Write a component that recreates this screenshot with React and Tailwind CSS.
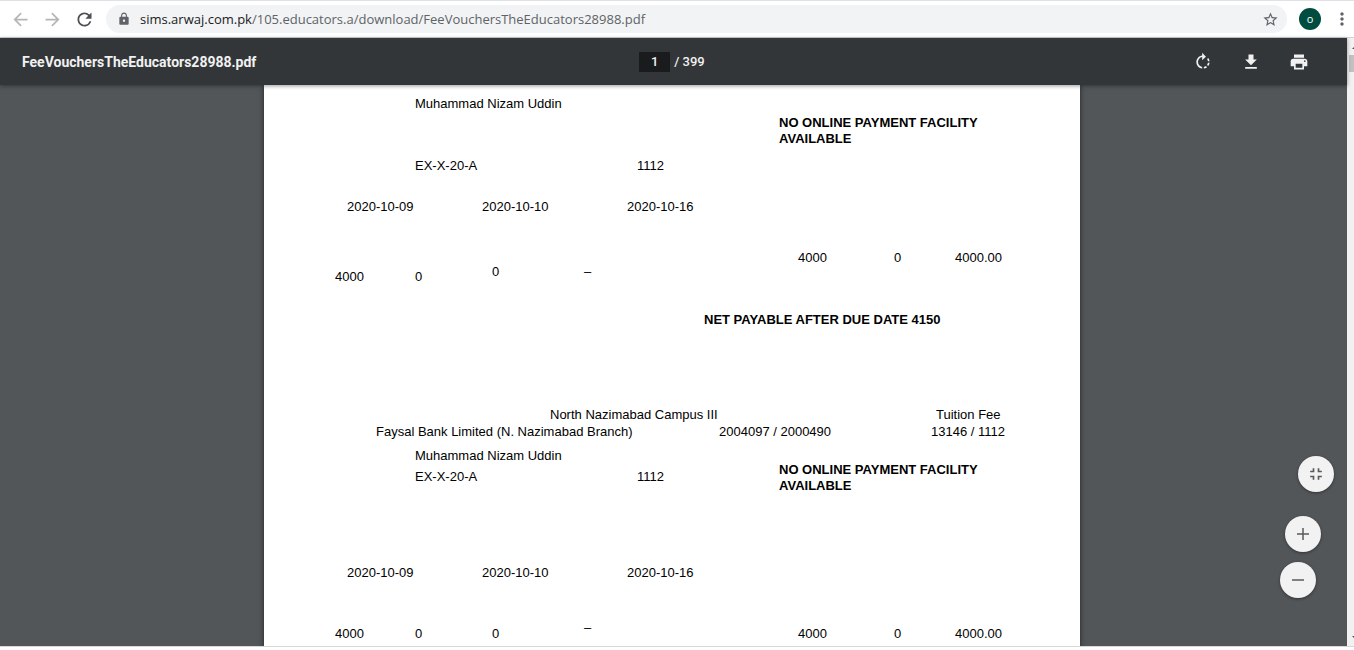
import React from "react";
import {
  MdArrowBack,
  MdArrowForward,
  MdRefresh,
  MdLock,
  MdStarBorder,
  MdMoreVert,
  MdRotateRight,
  MdFileDownload,
  MdPrint,
  MdFullscreenExit,
} from "react-icons/md";

function IconButton({ label, className = "", children }) {
  return (
    <button type="button" aria-label={label} className={`flex shrink-0 items-center justify-center ${className}`}>
      {children}
    </button>
  );
}

function BrowserBar() {
  return (
    <header className="flex h-[38px] shrink-0 items-center border-t border-b border-t-[#dee1e6] border-b-[#d0d2d5] bg-white pl-2">
      <IconButton label="Back" className="w-6 text-[#b4b6b8]">
        <MdArrowBack size={21} />
      </IconButton>
      <IconButton label="Forward" className="ml-2 w-6 text-[#b4b6b8]">
        <MdArrowForward size={21} />
      </IconButton>
      <IconButton label="Reload" className="ml-2 w-6 text-[#4c4f53]">
        <MdRefresh size={21} />
      </IconButton>
      <div className="ml-2.5 flex h-7 min-w-0 flex-1 items-center rounded-full bg-[#f1f3f4] pr-2 pl-[11px]">
        <MdLock size={14} className="shrink-0 text-[#5f6368]" />
        <div
          role="textbox"
          aria-label="Address"
          tabIndex={0}
          className="ml-[9px] min-w-0 flex-1 truncate font-['Open_Sans',sans-serif] text-[13px] leading-5 text-[#5f6368]"
        >
          <span className="text-[#202124]">sims.arwaj.com.pk</span>
          <span>/105.educators.a/download/FeeVouchersTheEducators28988.pdf</span>
        </div>
        <IconButton label="Bookmark this page" className="text-[#5f6368]">
          <MdStarBorder size={17} />
        </IconButton>
      </div>
      <button
        type="button"
        aria-label="Profile"
        className="ml-3 flex size-[22px] shrink-0 items-center justify-center rounded-full bg-[#004d40] font-['Open_Sans',sans-serif] text-[11px] text-white"
      >
        o
      </button>
      <IconButton label="Menu" className="mr-px ml-2.5 w-[22px] text-[#5f6368]">
        <MdMoreVert size={20} />
      </IconButton>
    </header>
  );
}

function Toolbar() {
  return (
    <div className="relative z-10 grid h-[47px] shrink-0 grid-cols-[1fr_auto_1fr] items-center bg-[#323639] pr-[25px] pl-[22px] font-[Roboto,sans-serif] text-[#f1f1f1] shadow-[0_1px_4px_rgba(0,0,0,0.4)]">
      <h1 className="truncate text-sm font-bold">FeeVouchersTheEducators28988.pdf</h1>
      <div className="flex items-center gap-1 text-[13px] font-medium">
        <input
          type="text"
          aria-label="Page number"
          defaultValue="1"
          className="h-5 w-[31px] bg-[#191b1c] text-center"
        />
        <span>/ 399</span>
      </div>
      <div className="flex justify-end gap-3 pr-[5px]">
        <IconButton label="Rotate clockwise" className="size-9">
          <MdRotateRight size={20} />
        </IconButton>
        <IconButton label="Download" className="size-9">
          <MdFileDownload size={20} />
        </IconButton>
        <IconButton label="Print" className="size-9">
          <MdPrint size={20} />
        </IconButton>
      </div>
    </div>
  );
}

function Dates({ className }) {
  return (
    <div className={`flex pl-[83px] ${className}`}>
      <span className="w-[135px]">2020-10-09</span>
      <span className="w-[145px]">2020-10-10</span>
      <span>2020-10-16</span>
    </div>
  );
}

function Totals({ className }) {
  return (
    <div className={`flex pl-[94px] ${className}`}>
      <span className="w-24">4000</span>
      <span className="w-[61px]">0</span>
      <span>4000.00</span>
    </div>
  );
}

function Notice() {
  return <p className="ml-[75px] w-[220px] font-bold">NO ONLINE PAYMENT FACILITY AVAILABLE</p>;
}

function FirstVoucher() {
  return (
    <section className="flex">
      <div className="w-[440px] pt-[11px]">
        <p className="pl-[151px]">Muhammad Nizam Uddin</p>
        <div className="mt-[46px] flex pl-[151px]">
          <span className="w-[222px]">EX-X-20-A</span>
          <span>1112</span>
        </div>
        <Dates className="mt-[25px]" />
        <div className="mt-[49px] flex h-[21px] pl-[71px]">
          <span className="w-20 self-end">4000</span>
          <span className="w-[77px] self-end">0</span>
          <span className="w-[92px]">0</span>
          <span>–</span>
        </div>
      </div>
      <div className="flex-1 pt-[30px]">
        <Notice />
        <Totals className="mt-[103px]" />
        <p className="mt-[46px] font-bold">NET PAYABLE AFTER DUE DATE 4150</p>
      </div>
    </section>
  );
}

function SecondVoucher() {
  return (
    <section className="mt-[79px]">
      <div className="flex pl-[286px]">
        <span className="w-[386px]">North Nazimabad Campus III</span>
        <span>Tuition Fee</span>
      </div>
      <div className="mt-px flex pl-28">
        <span className="w-[343px]">Faysal Bank Limited (N. Nazimabad Branch)</span>
        <span className="w-[212px]">2004097 / 2000490</span>
        <span>13146 / 1112</span>
      </div>
      <div className="flex">
        <div className="w-[440px] pt-2">
          <p className="pl-[151px]">Muhammad Nizam Uddin</p>
          <div className="mt-[5px] flex pl-[151px]">
            <span className="w-[222px]">EX-X-20-A</span>
            <span>1112</span>
          </div>
          <Dates className="mt-20" />
          <div className="mt-[39px] flex h-[22px] pl-[71px]">
            <span className="w-20 self-end">4000</span>
            <span className="w-[77px] self-end">0</span>
            <span className="w-[92px] self-end">0</span>
            <span>–</span>
          </div>
        </div>
        <div className="flex-1 pt-[22px]">
          <Notice />
          <Totals className="mt-[132px]" />
        </div>
      </div>
    </section>
  );
}

function ZoomButton({ label, className = "", children }) {
  return (
    <button
      type="button"
      aria-label={label}
      className={`flex size-9 items-center justify-center rounded-full bg-[#f2f2f2] text-[#5a5a5a] shadow-[0_1px_3px_rgba(0,0,0,0.4)] ${className}`}
    >
      {children}
    </button>
  );
}

function ZoomControls() {
  return (
    <div className="absolute right-[13px] bottom-12 flex flex-col items-end">
      <ZoomButton label="Fit to page">
        <MdFullscreenExit size={20} />
      </ZoomButton>
      <ZoomButton label="Zoom in" className="mt-6 mr-[13px]">
        <svg viewBox="0 0 12 12" className="size-3" fill="none" stroke="currentColor" strokeWidth="1.5">
          <path d="M0 6h12M6 0v12" />
        </svg>
      </ZoomButton>
      <ZoomButton label="Zoom out" className="mt-2.5 mr-[18px]">
        <svg viewBox="0 0 12 12" className="size-3" fill="none" stroke="currentColor" strokeWidth="1.5">
          <path d="M0 6h12" />
        </svg>
      </ZoomButton>
    </div>
  );
}

function Scrollbar() {
  return (
    <div aria-hidden="true" className="flex w-[7px] shrink-0 flex-col overflow-hidden bg-[#f1f1f1]">
      <svg viewBox="0 0 7 17" className="h-[17px] w-[7px] shrink-0" fill="#505050">
        <path d="M5 11l4-4v4z" />
      </svg>
      <div className="ml-0.5 h-[17px] shrink-0 bg-[#c1c1c1]" />
      <svg viewBox="0 0 7 17" className="mt-auto h-[17px] w-[7px] shrink-0" fill="#505050">
        <path d="M5 7l4 4V7z" />
      </svg>
    </div>
  );
}

export default function App() {
  return (
    <div className="flex h-screen flex-col bg-white">
      <BrowserBar />
      <div className="flex min-h-0 flex-1">
        <main className="relative flex min-w-0 flex-1 flex-col bg-[#525659]">
          <Toolbar />
          <div className="flex min-h-0 flex-1 justify-center overflow-hidden pr-[3px]">
            <article className="h-max min-h-full w-[816px] shrink-0 bg-white pb-5 font-['Liberation_Sans',Arial,sans-serif] text-[13px] leading-4 text-black shadow-[0_0_5px_rgba(0,0,0,0.6)]">
              <FirstVoucher />
              <SecondVoucher />
            </article>
          </div>
          <ZoomControls />
        </main>
        <Scrollbar />
      </div>
      <footer className="h-1 shrink-0 border-t border-[#d5d7da] bg-white" />
    </div>
  );
}
